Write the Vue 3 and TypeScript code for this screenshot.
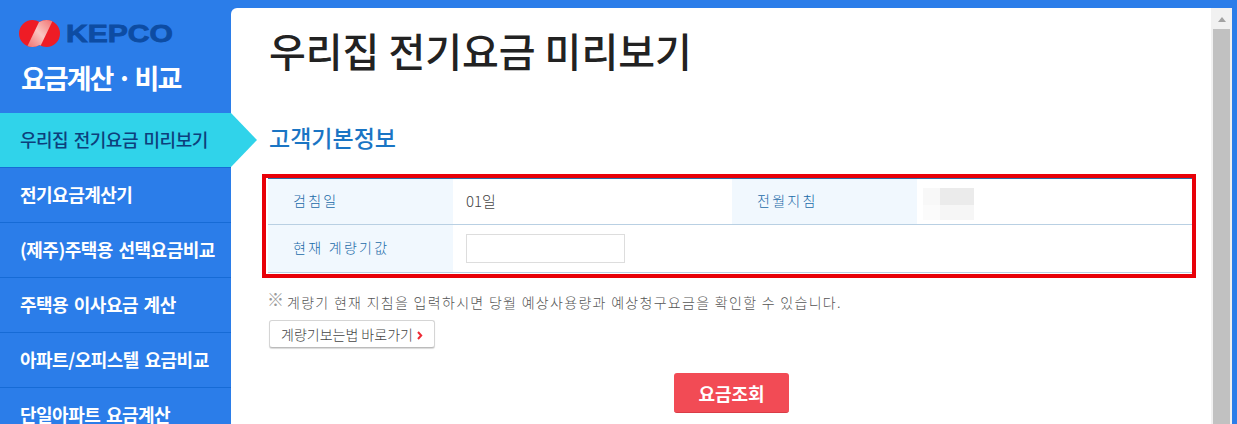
<script setup lang="ts">
const menus = [
  { label: '우리집 전기요금 미리보기', active: true },
  { label: '전기요금계산기' },
  { label: '(제주)주택용 선택요금비교' },
  { label: '주택용 이사요금 계산' },
  { label: '아파트/오피스텔 요금비교' },
  { label: '단일아파트 요금계산' }
]
</script>

<template>
  <div class="page">
    <aside class="side">
      <div class="brand">
        <svg class="logo" width="156" height="30" viewBox="0 0 156 30" aria-label="KEPCO">
          <defs>
            <linearGradient id="band" x1="0" y1="1" x2="1" y2="0">
              <stop offset="0" stop-color="#f2706e" />
              <stop offset="0.5" stop-color="#f9c6c2" />
              <stop offset="1" stop-color="#f2706e" />
            </linearGradient>
            <clipPath id="mark">
              <circle cx="13.5" cy="13.5" r="13.5" />
              <circle cx="27.5" cy="13.5" r="13.5" />
            </clipPath>
          </defs>
          <g clip-path="url(#mark)">
            <rect width="41" height="27" fill="#ee1c25" />
            <polygon points="8,27 21,27 34,0 21,0" fill="url(#band)" />
          </g>
          <text x="47" y="22" class="logo-text" textLength="107" lengthAdjust="spacingAndGlyphs">KEPCO</text>
        </svg>
        <div class="brand-title">요금계산 · 비교</div>
      </div>
      <nav class="menu">
        <a v-for="m in menus" :key="m.label" class="menu-item" :class="{ active: m.active }">{{ m.label }}</a>
      </nav>
    </aside>

    <main class="panel">
      <h1 class="title">우리집 전기요금 미리보기</h1>
      <h2 class="sub">고객기본정보</h2>

      <div class="mark">
        <table class="info">
          <tbody>
            <tr>
              <th>검침일</th>
              <td class="w1">01일</td>
              <th>전월지침</th>
              <td>
                <div class="blur">
                  <i style="background:#f8f8f8"></i><i style="background:#ebebeb"></i>
                  <i style="background:#fbfbfb"></i><i style="background:#f6f6f6"></i>
                </div>
              </td>
            </tr>
            <tr>
              <th>현재 계량기값</th>
              <td colspan="3"><input class="field" type="text" /></td>
            </tr>
          </tbody>
        </table>
      </div>

      <p class="note"><span class="ref">※</span>계량기 현재 지침을 입력하시면 당월 예상사용량과 예상청구요금을 확인할 수 있습니다.</p>
      <button class="link-btn" type="button">
        계량기보는법 바로가기
        <svg class="chev" width="6" height="9" viewBox="0 0 6 9"><path d="M1 1l3.2 3.5L1 8" fill="none" stroke="#ee2a35" stroke-width="2" /></svg>
      </button>
      <div class="actions">
        <button class="submit" type="button">요금조회</button>
      </div>
    </main>

    <div class="scrollbar">
      <span class="arrow"></span>
      <span class="thumb"></span>
    </div>
  </div>
</template>

<style scoped>
.page {
  display: flex;
  width: 1237px;
  height: 424px;
  overflow: hidden;
  background: #2b7de9;
  font-family: "Noto Sans CJK KR", "Noto Sans", sans-serif;
}

.side {
  position: relative;
  z-index: 2;
  flex: 0 0 231px;
  width: 231px;
}

.brand {
  height: 113px;
  box-sizing: border-box;
  padding: 20px 0 0 19px;
}

.logo {
  display: block;
}

.logo-text {
  font-family: "Liberation Sans", sans-serif;
  font-size: 24px;
  font-weight: 700;
  fill: #0d4ca3;
  stroke: #0d4ca3;
  stroke-width: .8px;
}

.brand-title {
  margin: 10px 0 0 2px;
  color: #fff;
  font-size: 27px;
  font-weight: 700;
  line-height: 36px;
  letter-spacing: -2px;
  white-space: nowrap;
}

.menu-item {
  display: block;
  box-sizing: border-box;
  height: 55px;
  padding-left: 20px;
  border-bottom: 1px solid #166bd6;
  color: #fff;
  font-size: 18px;
  font-weight: 700;
  line-height: 53px;
  letter-spacing: -.5px;
  word-spacing: 2px;
  white-space: nowrap;
}

.menu-item.active {
  position: relative;
  background: #30d3ea;
  color: #0d3f7c;
  font-weight: 500;
}

.menu-item.active::after {
  content: "";
  position: absolute;
  top: 0;
  left: 231px;
  border-style: solid;
  border-width: 27px 0 27px 26px;
  border-color: transparent transparent transparent #30d3ea;
}

.panel {
  flex: 0 0 980px;
  box-sizing: border-box;
  height: 416px;
  margin-top: 8px;
  overflow: hidden;
  padding-left: 31px;
  background: #fff;
  border-top-left-radius: 6px;
}

.title {
  margin: 14px 0 0 7px;
  color: #222;
  font-size: 40px;
  font-weight: 500;
  line-height: 56px;
  white-space: nowrap;
}

.sub {
  margin: 42px 0 0 7px;
  color: #1a75c4;
  font-size: 23px;
  font-weight: 500;
  line-height: 34px;
}

.mark {
  box-sizing: border-box;
  width: 934px;
  height: 104px;
  margin-top: 20px;
  padding-left: 2px;
  border: 4px solid #e80008;
}

.info {
  width: 924px;
  border-collapse: collapse;
  border-top: 1px solid #2a6fa8;
  table-layout: fixed;
}

.info tr {
  border-bottom: 1px solid #b9d0e3;
}

.info tr:first-child {
  height: 46px;
}

.info tr:last-child {
  height: 48px;
}

.info th {
  width: 185px;
  box-sizing: border-box;
  padding: 0 0 3px 25px;
  background: #f1f8fe;
  color: #1a6aa8;
  font-size: 14px;
  font-weight: 300;
  letter-spacing: 2.3px;
  text-align: left;
}

.info td {
  padding: 0 0 2px 13px;
  color: #444;
  font-size: 15px;
  font-weight: 300;
}

.info td.w1 {
  width: 266px;
}

.info td .blur {
  display: grid;
  grid-template-columns: 17px 34px;
  grid-template-rows: 17px 15px;
  width: 51px;
  margin: 6px 0 0 -7px;
}

.field {
  display: block;
  box-sizing: border-box;
  width: 159px;
  height: 29px;
  margin-top: 2px;
  border: 1px solid #ddd;
  outline: none;
  background: #fff;
}

.note {
  height: 22px;
  margin: 12px 0 0 5px;
  color: #555;
  font-size: 14px;
  font-weight: 300;
  line-height: 22px;
  letter-spacing: 1.3px;
  white-space: nowrap;
}

.ref {
  display: inline-block;
  width: 20px;
  color: #999;
  font-size: 17px;
  line-height: 1;
  letter-spacing: 0;
  vertical-align: 2px;
}

.link-btn {
  display: block;
  box-sizing: border-box;
  width: 166px;
  height: 28px;
  margin: 8px 0 0 7px;
  padding: 0;
  border: 1px solid #d5d5d5;
  border-bottom-color: #bbb;
  border-radius: 3px;
  background: #fff;
  box-shadow: 0 1px 1px rgba(0, 0, 0, .15);
  color: #444;
  font-family: inherit;
  font-size: 14px;
  font-weight: 300;
  white-space: nowrap;
}

.chev {
  margin-left: 1px;
}

.actions {
  margin-top: 25px;
  padding-left: 412px;
}

.submit {
  width: 115px;
  height: 40px;
  padding: 0;
  border: 0;
  border-bottom: 1px solid #d93c46;
  border-radius: 3px;
  background: #f24b55;
  color: #fff;
  font-family: inherit;
  font-size: 18px;
  font-weight: 700;
}

.scrollbar {
  display: flex;
  flex-direction: column;
  align-items: center;
  flex: 0 0 21px;
  height: 416px;
  margin-top: 8px;
  background: #f1f1f1;
}

.arrow {
  margin-top: 9px;
  border-style: solid;
  border-width: 0 4.5px 5px;
  border-color: transparent transparent #a3a3a3;
}

.thumb {
  width: 17px;
  height: 400px;
  margin-top: 7px;
  background: #c1c1c1;
}
</style>

<style>
html, body {
  margin: 0;
  overflow: hidden;
}
</style>
